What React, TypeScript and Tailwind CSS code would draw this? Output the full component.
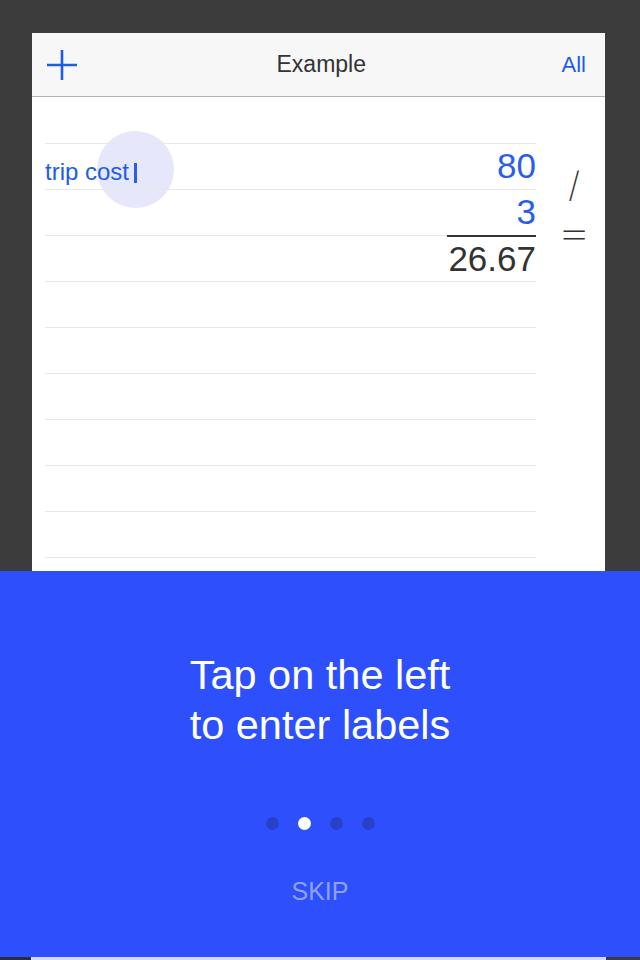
import React from "react";

const rows = ["trip cost", "", "", "", "", "", "", "", "", ""];

function PlusIcon() {
  return (
    <svg width="30" height="30" viewBox="0 0 30 30" fill="none">
      <path d="M15 0v30M0 15h30" stroke="#1f5ce6" strokeWidth="2.6" />
    </svg>
  );
}

export default function App() {
  return (
    <div
      className="flex h-[960px] w-[640px] flex-col overflow-hidden bg-[#3c3c3c]"
      style={{ fontFamily: '"Liberation Sans", Arial, sans-serif' }}
    >
      <div className="h-[33px] shrink-0" />

      {/* card */}
      <div className="ml-[32px] flex h-[538px] w-[573px] shrink-0 flex-col bg-white">
        <div className="flex h-[64px] shrink-0 items-center justify-between border-b border-[#b2b2b2] bg-[#f7f7f7] pl-[15px] pr-[19px]">
          <PlusIcon />
          <span className="pl-[4px] text-[23px] text-[#333]">Example</span>
          <span className="text-[22px] text-[#1f5ce6]">All</span>
        </div>

        <div className="relative flex flex-1 overflow-hidden">
          <div className="ml-[13px] w-[491px] pt-[46px]">
            {rows.map((label, i) => (
              <div key={i} className="relative z-10 flex h-[46px] items-start justify-between border-t border-[#e8e8e8]">
                <div className="pt-[13px] text-[24px] leading-[30px] text-[#1f5ce6]">
                  {label}
                  {label && <span className="ml-[5px] inline-block h-[20px] w-[3px] translate-y-[3px] bg-[#2a5ee8]" />}
                </div>
                {i === 0 && <span className="text-[35px] leading-[44px] text-[#2a5ee8]">80</span>}
                {i === 1 && <span className="text-[35px] leading-[44px] text-[#2a5ee8]">3</span>}
                {i === 2 && (
                  <span className="-mt-px border-t-2 border-[#333] pl-px text-[35px] leading-[44px] text-[#333]">26.67</span>
                )}
              </div>
            ))}
          </div>

          <div
            className="ml-[23px] flex w-[30px] flex-col items-center pt-[72px] text-[#333]"
            style={{ fontFamily: "Inter, sans-serif" }}
          >
            <span className="h-[30px] text-[35px] font-extralight leading-[30px]">/</span>
            <span className="mt-[18px] h-[30px] scale-x-[1.5] text-[38px] font-extralight leading-[30px]">=</span>
          </div>

          <div className="absolute left-[65px] top-[34px] h-[77px] w-[77px] rounded-full bg-[#e6e7fa]" />
        </div>
      </div>

      {/* onboarding panel */}
      <div className="flex h-[386px] shrink-0 flex-col items-center bg-[#2d50fc]">
        <div className="mt-[79px] text-center text-[41.5px] leading-[50px] text-white">
          Tap on the left
          <br />
          to enter labels
        </div>
        <div className="mt-[67px] flex gap-[19px]">
          <span className="h-[13px] w-[13px] rounded-full bg-[#2642c8]" />
          <span className="h-[13px] w-[13px] rounded-full bg-white" />
          <span className="h-[13px] w-[13px] rounded-full bg-[#2642c8]" />
          <span className="h-[13px] w-[13px] rounded-full bg-[#2642c8]" />
        </div>
        <div className="mt-[46px] text-[25px] leading-[30px] text-[#8fa2f8]">SKIP</div>
      </div>

      <div className="flex h-[3px] shrink-0">
        <div className="w-[31px] bg-[#2b2e3a]" />
        <div className="w-[575px] bg-[#d3dbf3]" />
      </div>
    </div>
  );
}
